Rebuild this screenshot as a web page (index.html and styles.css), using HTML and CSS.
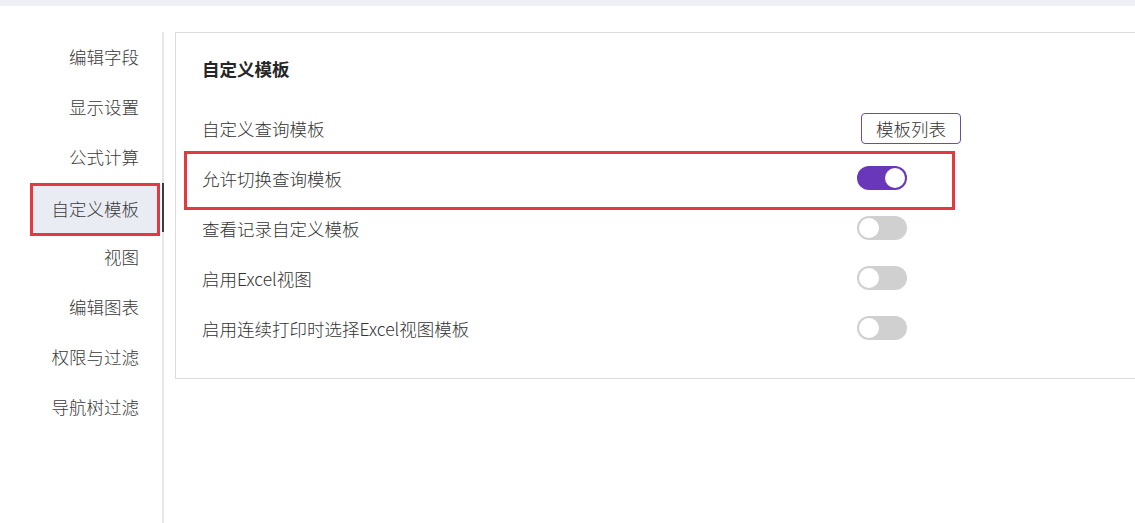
FILE: index.html
```html
<!DOCTYPE html>
<html lang="zh-CN">
<head>
<meta charset="utf-8">
<title>自定义模板</title>
<link rel="stylesheet" href="styles.css">
</head>
<body>
<div class="topband"></div>
<div class="main">
  <nav class="nav">
    <div class="nav-item">编辑字段</div>
    <div class="nav-item">显示设置</div>
    <div class="nav-item">公式计算</div>
    <div class="nav-item active">自定义模板</div>
    <div class="nav-item">视图</div>
    <div class="nav-item">编辑图表</div>
    <div class="nav-item">权限与过滤</div>
    <div class="nav-item">导航树过滤</div>
  </nav>
  <section class="panel">
    <h2 class="title">自定义模板</h2>
    <div class="row">
      <span class="label">自定义查询模板</span>
      <button class="btn">模板列表</button>
    </div>
    <div class="row highlight">
      <span class="label">允许切换查询模板</span>
      <span class="switch on"><span class="knob"></span></span>
    </div>
    <div class="row">
      <span class="label">查看记录自定义模板</span>
      <span class="switch"><span class="knob"></span></span>
    </div>
    <div class="row">
      <span class="label">启用Excel视图</span>
      <span class="switch"><span class="knob"></span></span>
    </div>
    <div class="row">
      <span class="label">启用连续打印时选择Excel视图模板</span>
      <span class="switch"><span class="knob"></span></span>
    </div>
  </section>
</div>
</body>
</html>
```

FILE: styles.css
```css
*, *::before, *::after { box-sizing: border-box; }
html, body {
  margin: 0;
  padding: 0;
  background: #fff;
  overflow: hidden;
  height: 523px;
}
body {
  font-family: "Microsoft YaHei", "Noto Sans CJK SC", "Noto Sans", sans-serif;
  font-size: 17.5px;
  font-weight: 300;
  color: #333;
}
.topband {
  height: 6px;
  background: #eff0f5;
}
.main {
  display: flex;
  align-items: flex-start;
  height: 517px;
}
.nav {
  width: 164px;
  flex: none;
  align-self: stretch;
  margin-top: 26px;
  border-right: 2px solid #e6e6e6;
}
.nav-item {
  position: relative;
  height: 50px;
  line-height: 50px;
  margin: 0 3px 0 31px;
  padding-right: 20px;
  text-align: right;
  color: #3a3a3a;
  white-space: nowrap;
}
.nav-item.active {
  background: #eaecf4;
  outline: 3px solid #e4393e;
  outline-offset: -2px;
  height: 51px;
  margin-top: 2px;
  margin-bottom: -3px;
}
.nav-item.active::after {
  content: "";
  position: absolute;
  right: -5px;
  top: -1px;
  width: 2px;
  height: 49px;
  background: #3b3b45;
}
.panel {
  flex: 1;
  margin: 26px -10px 0 11px;
  border: 1px solid #dcdcdc;
  padding: 11px 0 25px 26px;
}
.title {
  margin: 0 0 9px;
  height: 50px;
  line-height: 50px;
  font-size: 17.5px;
  font-weight: bold;
  color: #262626;
}
.row {
  position: relative;
  display: flex;
  align-items: center;
  height: 50px;
}
.label {
  width: 655px;
  flex: none;
  white-space: nowrap;
}
.row.highlight::before {
  content: "";
  position: absolute;
  left: -18px;
  top: -2px;
  width: 771px;
  height: 59px;
  border: 3px solid #e4393e;
  pointer-events: none;
}
.btn {
  margin-left: 4px;
  width: 100px;
  height: 31px;
  border: 1px solid #6d4ca6;
  border-radius: 4px;
  background: #fff;
  font-family: inherit;
  font-size: 17.5px;
  font-weight: 300;
  color: #333;
  padding: 0;
  line-height: 29px;
}
.switch {
  position: relative;
  display: inline-block;
  width: 50px;
  height: 24px;
  border-radius: 12px;
  background: #d0d0d0;
}
.switch .knob {
  position: absolute;
  top: 2px;
  left: 2px;
  width: 20px;
  height: 20px;
  border-radius: 50%;
  background: #fff;
}
.switch.on {
  background: #6937b9;
}
.switch.on .knob {
  left: 28px;
}
```
